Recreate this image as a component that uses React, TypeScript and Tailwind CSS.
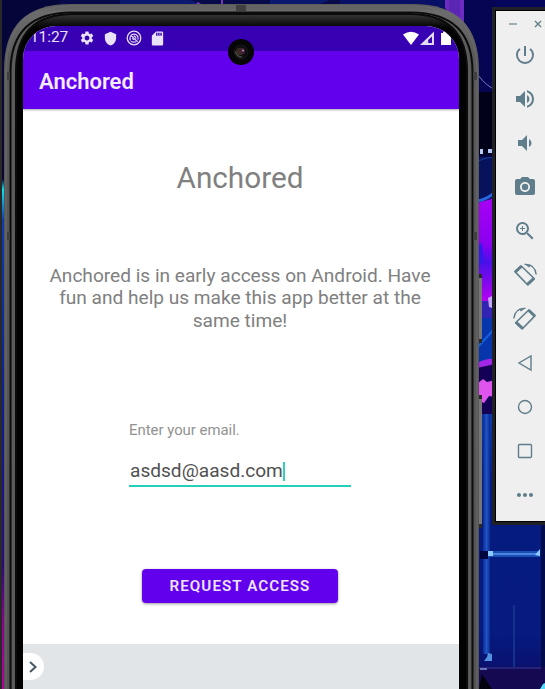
import React from "react";
import { MdSettings, MdShield, MdSdCard, MdVolumeUp, MdVolumeDown, MdPhotoCamera, MdZoomIn, MdMoreHoriz, MdPowerSettingsNew } from "react-icons/md";

function Wallpaper() {
  return (
    <svg className="absolute inset-0" width="545" height="689" viewBox="0 0 545 689">
      <defs>
        <linearGradient id="left" x1="0" y1="0" x2="0" y2="1">
          <stop offset="0" stopColor="#050a3c" />
          <stop offset="0.26" stopColor="#0a0530" />
          <stop offset="0.275" stopColor="#10e0e8" />
          <stop offset="0.32" stopColor="#0a3cb0" />
          <stop offset="0.6" stopColor="#0a1e90" />
          <stop offset="0.82" stopColor="#2a0a80" />
          <stop offset="0.9" stopColor="#8a0290" />
          <stop offset="1" stopColor="#b0059a" />
        </linearGradient>
        <linearGradient id="mag" x1="0" y1="0" x2="0" y2="1">
          <stop offset="0" stopColor="#a800f4" />
          <stop offset="0.45" stopColor="#8a00f0" />
          <stop offset="0.62" stopColor="#4a10e8" />
          <stop offset="1" stopColor="#b400f0" />
        </linearGradient>
        <linearGradient id="blue" x1="0" y1="0" x2="0" y2="1">
          <stop offset="0" stopColor="#0a3cae" />
          <stop offset="0.25" stopColor="#061c80" />
          <stop offset="0.8" stopColor="#061a80" />
          <stop offset="1" stopColor="#0c0c62" />
        </linearGradient>
        <linearGradient id="pillar" x1="0" y1="0" x2="1" y2="0">
          <stop offset="0" stopColor="#0a2a92" />
          <stop offset="0.5" stopColor="#1f55c4" />
          <stop offset="1" stopColor="#0a2a92" />
        </linearGradient>
      </defs>
      <rect width="545" height="689" fill="#03033a" />
      <rect width="8" height="689" fill="url(#left)" />
      <path d="M0 0H446V12H0z" fill="#060a48" />
      <path d="M0 0h60v14L30 30 4 60H0z" fill="#04063a" />
      <rect width="2" height="689" fill="#292929" />
      <path d="M120 0h70l10 4h-80zM270 0h60l-10 4h-50z" fill="#0a1870" />
      <path d="M196 4l2-2 3 2zM221 0h2v4h-2z" fill="#7a38b8" />
      <path d="M340 0h105v12H340z" fill="#071064" />
      <path d="M445 0h19v24l-12-8-7-8z" fill="#5c26b4" />
      <path d="M445 0h4v12l-4-4zM460 0h4v22l-4-3z" fill="#6c2cc4" />
      <path d="M464 0h81v12H464z" fill="#06065c" />
      <path d="M464 0h31v92h-17l-4-40-10-30z" fill="#050554" />
      <path d="M478 75q8 11 18 15" stroke="#7777b8" fill="none" />
      <path d="M475 92h20v62h-20z" fill="#01011a" />
      <path d="M480 149h3v5h-3zM488 149h4v4h-4z" fill="#b6c8f8" />
      <path d="M475 157h20v45h-20z" fill="#06135c" />
      <path d="M477 162q10-6 18-4" stroke="#173f9a" fill="none" />
      <path d="M477 203l18-5v103h-18z" fill="url(#mag)" />
      <path d="M478 201q10-2 17-9" stroke="#2867df" strokeWidth="3" fill="none" />
      <path d="M477 245l5-2 2 18-7 8z" fill="#3518ec" />
      <path d="M477 301h18v17h-18z" fill="#3224b2" />
      <path d="M488 298l4-2 3 8v5l-6-2z" fill="#c6a4ff" />
      <path d="M477 318h18v47h-18z" fill="#0735ac" />
      <path d="M477 348l18-20" stroke="#1661dc" strokeWidth="2" />
      <path d="M477 363q10-5 18-4v7l-18 3z" fill="#a226e8" />
      <path d="M477 368l18-4v50h-18z" fill="#150057" />
      <path d="M477 384l6-5 4 3 8-2v17l-6-1-5 7-7-3z" fill="#df54ef" />
      <path d="M477 414h68v275h-68z" fill="url(#blue)" />
      <path d="M483 414h7v240h-7z" fill="url(#pillar)" />
      <path d="M541 520h4v169h-4z" fill="#040b4a" />
      <path d="M480 551h8v8h-8z" fill="#02063e" />
      <path d="M488 551h52v6h-52z" fill="#194eb5" />
      <path d="M489 554h50" stroke="#4c84e0" strokeWidth="2" />
      <path d="M488 551h5v5h-5zM535 555l5-6v7z" fill="#8fcaff" />
      <path d="M514 605v84" stroke="#16308e" strokeWidth="2" />
      <path d="M484 661l3-4 1-4 4 1v7z" fill="#5390e0" />
      <path d="M477 667h68v22h-68z" fill="#150952" />
      <path d="M477 668h64" stroke="#28227a" strokeWidth="2" />
      <path d="M480 669h7" stroke="#6974b8" strokeWidth="2" />
      <path d="M482 674l10 15h-13z" fill="#03030d" />
      <path d="M540 689l3-5 2-1v6z" fill="#57daf8" />
    </svg>
  );
}

function ScanIcon() {
  return (
    <svg width="16" height="16" viewBox="0 0 16 16" fill="none" stroke="#e4dcf7">
      <circle cx="8" cy="8" r="6.8" strokeWidth="1.3" />
      <path d="M4.6 10.4A4.1 4.1 0 1 1 11.9 9.6" strokeWidth="1.2" />
      <path d="M5.2 5.6L11.6 11.8M5 11.2Q7.5 12.8 10 11.8" strokeWidth="1.2" />
      <path d="M7.6 6.2A1.9 1.9 0 0 1 9.8 8.6M6.3 8Q6.6 9.6 8.2 9.8" strokeWidth="1.1" />
    </svg>
  );
}

function StatusBar() {
  return (
    <div className="flex h-[25px] shrink-0 items-center bg-[#3700b3] pb-px pl-[7px] text-[#e9e2f8]">
      <span className="w-[38px] text-[15.5px] leading-none tracking-[-0.1px]">11:27</span>
      <MdSettings className="ml-[11px]" size={16} />
      <MdShield className="ml-[8px]" size={15} />
      <span className="ml-[8px]"><ScanIcon /></span>
      <MdSdCard className="ml-[7px]" size={17} />
      <svg className="ml-auto mr-[7px] shrink-0" width="50" height="16" viewBox="0 0 50 16" fill="#fff">
        <path d="M1 4.5Q9-1 17 4.5L9 15z" />
        <path fillRule="evenodd" d="M18 15L32 1.5V15zM26.2 13H30V6.5L26.2 10z" opacity=".85" />
        <path d="M39 3h2V1.5h5V3h3v12H39z" />
      </svg>
    </div>
  );
}

function Screen() {
  return (
    <div className="flex h-[663px] w-[436px] flex-col overflow-hidden rounded-t-[33px] bg-white">
      <StatusBar />
      <header className="z-10 flex h-[58px] shrink-0 items-center bg-[#6200ee] pl-4 pt-[2px] text-[22px] text-[#f4ecff] shadow-[0_1px_2px_rgba(0,0,0,.35)]">
        <span className="whitespace-nowrap font-semibold">Anchored</span>
      </header>
      <main className="flex h-[535px] shrink-0 flex-col items-center pr-[2px] text-[#808080]">
        <h1 className="mt-[49px] text-[29.7px] leading-[40px]">Anchored</h1>
        <p className="mt-[67px] text-center text-[19.1px] leading-[22.4px] whitespace-pre">{"Anchored is in early access on Android. Have\nfun and help us make this app better at the\nsame time!"}</p>
        <div className="mt-[88px] flex w-[222px] flex-col">
          <label className="text-[14.9px] leading-[20px] text-[#929292]">Enter your email.</label>
          <div className="mt-[17px] flex h-[30px] items-center border-b-2 border-[#24cfb8] pl-px text-[19.1px] text-[#515151]">
            <span>asdsd@aasd.com</span>
            <span className="h-[19px] w-[2px] bg-[#35cfbd]" />
          </div>
        </div>
        <button className="mt-[82px] h-[34px] w-[196px] rounded-[4px] bg-[#6200ee] text-[15.2px] font-semibold tracking-[1.05px] text-[#eee4ff] shadow-[0_1px_3px_rgba(0,0,0,.4)]">REQUEST ACCESS</button>
      </main>
      <footer className="flex flex-1 items-start bg-[#e1e5e8] pt-[9px]">
        <span className="flex h-[27px] w-[21px] items-center rounded-r-full bg-white pl-[5px]">
          <svg width="11" height="14" viewBox="0 0 11 14" fill="none" stroke="#485862" strokeWidth="2"><path d="M2 2L7.5 7L2 12" /></svg>
        </span>
      </footer>
    </div>
  );
}

function Phone() {
  return (
    <div className="absolute left-[4px] top-[4px] h-[685px] w-[478px]">
      <svg className="absolute inset-0" width="478" height="685" viewBox="0 0 478 685" fill="none">
        <defs>
          <linearGradient id="rim" gradientUnits="userSpaceOnUse" x1="0" y1="0" x2="0" y2="685">
            <stop offset="0" stopColor="#5a5a5a" />
            <stop offset="0.012" stopColor="#6c6c6c" />
            <stop offset="0.08" stopColor="#595959" />
            <stop offset="1" stopColor="#535353" />
          </linearGradient>
          <linearGradient id="bezel" gradientUnits="userSpaceOnUse" x1="0" y1="11" x2="0" y2="24">
            <stop offset="0" stopColor="#333" /><stop offset="1" stopColor="#020202" />
          </linearGradient>
        </defs>
        <path d="M474 270h4v69h-4zM474 391h4v133h-4z" fill="#777" />
        <path d="M474 270h4v4h-4zM474 335h4v4h-4zM474 391h4v4h-4zM474 520h4v4h-4z" fill="#292929" />
        <path d="M0 700V66Q0 0 66 0H409Q475 0 475 66V700z" fill="url(#rim)" />
        <path d="M2 700V67Q2 2 67 2H408Q473 2 473 67V700" stroke="#6c6c6c" />
        <path d="M6.5 700V68Q6.5 8.5 68 8.5H407Q468.5 8.5 468.5 68V700" stroke="#0c0c0c" strokeWidth="2" />
        <path d="M9.5 700V69Q9.5 10.5 69 10.5H406Q465.5 10.5 465.5 69V700" stroke="#5c5c5c" strokeWidth="2.6" />
        <path d="M12 700V67Q12 9.5 69 9.5H406Q463 9.5 463 67V700z" fill="url(#bezel)" />
        <path d="M12 700V67Q12 10 69 10H406Q463 10 463 67V700" stroke="#0b0b0b" strokeWidth="2" />
        <path d="M3 228h3v8H3zM469 228h4v8h-4zM3 68h3v8H3zM469 68h4v8h-4zM232 1h10v6h-10z" fill="#404040" />
      </svg>
      <div className="relative ml-[19px] mt-[22px]"><Screen /></div>
      <svg className="absolute left-[224px] top-[35px] z-20" width="26" height="26" viewBox="0 0 26 26">
        <circle cx="13" cy="13" r="13" fill="#060606" />
        <circle cx="13" cy="13" r="7" fill="#0f0e10" stroke="#181818" />
        <path d="M7.5 12Q8.5 18 14 18" fill="none" stroke="#4c4c4c" strokeWidth="1.5" />
        <circle cx="12" cy="12.5" r="3.7" fill="#392e20" />
        <circle cx="14" cy="12" r="3" fill="#412235" />
        <circle cx="15" cy="11.5" r=".9" fill="#c695ba" />
      </svg>
    </div>
  );
}

function Rotate({ flip = false }: { flip?: boolean }) {
  return (
    <svg className={flip ? "-scale-x-100" : ""} width="24" height="24" viewBox="0 0 24 24" fill="none" stroke="#607d8b">
      <path d="M1.9 8.6L8 2.8L21.4 15.8L14.8 22Z" strokeWidth="1.6" strokeLinejoin="round" />
      <path d="M2.4 8.9L8.2 3.4M14.4 21.2L20.6 15.4" strokeWidth="2.8" />
      <path d="M11.5 1.4Q21.8.6 23.2 11.5" strokeWidth="1.4" />
      <path d="M12 1.2L16.2 4.2L17.6 2.4z" fill="#607d8b" strokeWidth=".5" />
    </svg>
  );
}

function Toolbar() {
  const items = [
    <MdPowerSettingsNew size={24} />,
    <MdVolumeUp size={24} />,
    <MdVolumeDown size={24} />,
    <MdPhotoCamera size={24} />,
    <MdZoomIn size={24} />,
    <Rotate />,
    <Rotate flip />,
    <svg width="18" height="18" viewBox="0 0 18 18" fill="none" stroke="currentColor" strokeWidth="1.4"><path d="M15 2V16L3 9z" /></svg>,
    <svg width="18" height="18" viewBox="0 0 18 18" fill="none" stroke="currentColor" strokeWidth="1.4"><circle cx="9" cy="9" r="6.5" /></svg>,
    <svg width="18" height="18" viewBox="0 0 18 18" fill="none" stroke="currentColor" strokeWidth="1.4"><rect x="2.5" y="2.5" width="13" height="13" rx="1" /></svg>,
    <MdMoreHoriz size={24} />,
  ];
  return (
    <aside className="absolute left-[492px] top-[7px] h-[518px] w-[60px] border-[3px] border-[#202127] bg-[#efefef] text-[#607d8b]">
      <div className="h-full border border-black">
        <div className="flex h-[22px] items-center pl-[13px] pt-[4px]">
          <span className="h-[2px] w-[8px] bg-[#9fb0b8]" />
          <svg className="ml-[17px]" width="8" height="8" viewBox="0 0 8 8" stroke="#607d8b" strokeWidth="1.4"><path d="M1 1l6 6M7 1L1 7" /></svg>
        </div>
        <div className="flex w-[58px] flex-col">
          {items.map((icon, i) => <div key={i} className="flex h-[44px] w-[58px] items-center justify-center">{icon}</div>)}
        </div>
      </div>
    </aside>
  );
}

export default function App() {
  return (
    <div className="relative h-[689px] w-[545px] overflow-hidden font-['Roboto',sans-serif]">
      <Wallpaper />
      <Phone />
      <Toolbar />
    </div>
  );
}
